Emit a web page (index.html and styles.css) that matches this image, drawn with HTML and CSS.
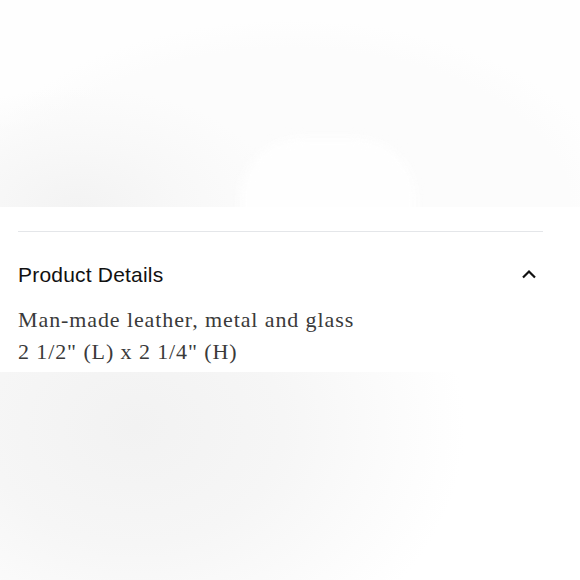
FILE: index.html
```html
<!DOCTYPE html>
<html lang="en">
<head>
<meta charset="utf-8">
<title>Product Details</title>
<link rel="stylesheet" href="styles.css">
</head>
<body>
  <div class="media media-top">
    <div class="shape"></div>
  </div>
  <section class="details">
    <hr class="divider">
    <div class="accordion-head">
      <h2 class="title">Product Details</h2>
      <svg class="chevron" width="16" height="10" viewBox="0 0 16 10" aria-hidden="true">
        <path d="M2 8.5 L8 2.5 L14 8.5" fill="none" stroke="#111" stroke-width="2.2"/>
      </svg>
    </div>
    <div class="body">
      <p>Man-made leather, metal and glass</p>
      <p>2 1/2" (L) x 2 1/4" (H)</p>
    </div>
  </section>
  <div class="media media-bottom"></div>
</body>
</html>
```

FILE: styles.css
```css
html, body {
  margin: 0;
  padding: 0;
  background: #fff;
}
body {
  width: 580px;
  overflow: hidden;
}
.media {
  position: relative;
  overflow: hidden;
}
.media-top {
  height: 207px;
  background:
    radial-gradient(ellipse 200px 120px at 80px 207px, #f3f3f3 0%, #f8f8f8 50%, rgba(252,252,252,0) 100%),
    radial-gradient(ellipse 330px 190px at 290px 210px, #fcfcfc 0%, #fcfcfc 85%, #fefefe 100%);
  background-color: #fefefe;
}
.media-top .shape {
  position: absolute;
  left: 240px;
  top: 138px;
  width: 176px;
  height: 90px;
  border-radius: 60px 60px 0 0;
  background: #fefefe;
  filter: blur(6px);
}
.details {
  padding: 24px 37px 0 18px;
  height: 141px;
  background: #fff;
}
.divider {
  margin: 0;
  border: 0;
  border-top: 1.5px solid #e4e6e9;
}
.accordion-head {
  display: flex;
  align-items: center;
  justify-content: space-between;
  margin-top: 31px;
}
.title {
  margin: 0;
  font-family: "Liberation Sans", Arial, sans-serif;
  font-weight: 400;
  font-size: 21px;
  line-height: 24px;
  letter-spacing: 0.2px;
  color: #111;
}
.chevron {
  margin-right: 6px;
  margin-top: -3px;
}
.body {
  margin-top: 17px;
  font-family: "Liberation Serif", "Times New Roman", serif;
  font-size: 22px;
  line-height: 32px;
  letter-spacing: 0.9px;
  color: #3a3a3a;
}
.body p {
  margin: 0;
}
.media-bottom {
  height: 208px;
  background:
    radial-gradient(ellipse 330px 260px at 135px 55px, #f2f2f2 0%, #f6f6f6 45%, #fbfbfb 75%, rgba(255,255,255,0) 100%);
  background-color: #fff;
}
```
